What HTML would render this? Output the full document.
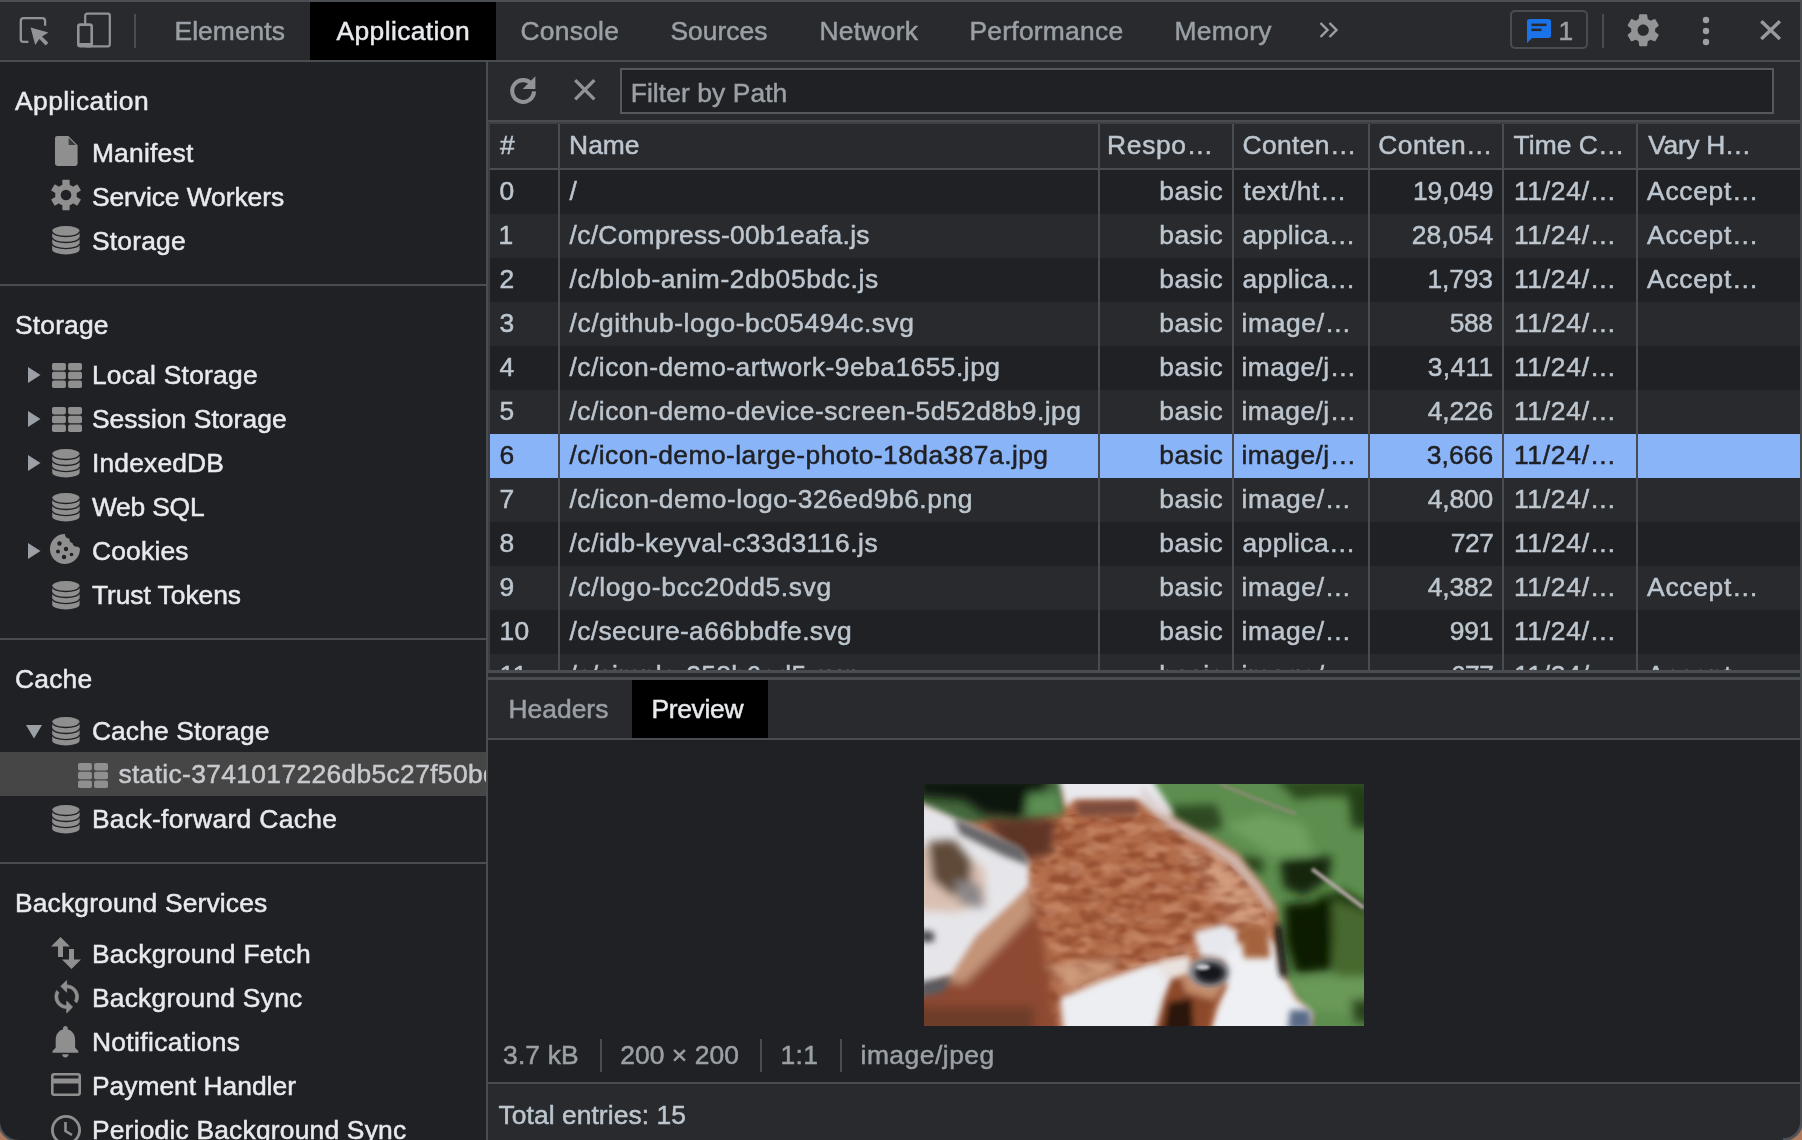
<!DOCTYPE html>
<html lang="en">
<head>
<meta charset="utf-8">
<title>DevTools - Application - Cache Storage</title>
<style>
html,body{margin:0;padding:0;}
body{width:1802px;height:1140px;overflow:hidden;background:#202124;position:relative;
  font-family:"Liberation Sans",sans-serif;font-size:26.4px;color:#e8eaed;}
.abs{position:absolute;}
svg{position:absolute;overflow:visible;}
.t{position:absolute;height:44px;line-height:44px;white-space:nowrap;-webkit-text-stroke:0.5px currentColor;}
#wrap{position:absolute;left:0;top:0;width:1802px;height:1140px;will-change:transform;}
#topline{left:0;top:0;width:1802px;height:2px;background:#4b4e52;}
#tabbar{left:0;top:2px;width:1802px;height:58px;background:#292a2d;}
#tabborder{left:0;top:60px;width:1802px;height:2px;background:#494c50;}
.seltab{position:absolute;height:58px;background:#000;}
.vdiv{position:absolute;width:2px;background:#494c50;}
#sidebar{left:0;top:62px;width:486px;height:1078px;background:#202124;overflow:hidden;}
#sideborder{left:486px;top:62px;width:2px;height:1078px;background:#494c50;}
.sep{position:absolute;left:0;width:486px;height:2px;background:#494c50;}
#toolbar{left:488px;top:62px;width:1314px;height:58px;background:#292a2d;}
#toolborder{left:488px;top:120px;width:1314px;height:2px;background:#494c50;}
#filterbox{left:620px;top:68px;width:1150px;height:42px;border:2px solid #55585c;background:#202124;}
#grid{left:488px;top:122px;width:1314px;height:548px;background:#292a2d;overflow:hidden;}
.row{position:absolute;left:2px;width:1310px;height:44px;}
.row.odd{background:#202124;}
.row.even{background:#292a2d;}
.row.selr{background:#8ab4f8;}
.gl{position:absolute;top:2px;width:2px;height:548px;background:#494c50;}
</style>
</head>
<body>
<div id="wrap">
<div class="abs" id="tabbar"></div>
<div class="abs" id="topline"></div>
<div class="abs" id="tabborder"></div>
<div class="seltab" style="left:310px;top:2px;width:186px"></div>
<svg id="ic-inspect" style="left:18px;top:14px" width="34" height="34" viewBox="0 0 34 34"><path d="M27.1 11.7V6.8Q27.1 4.1 24.4 4.1H5.5Q2.8 4.1 2.8 6.8V25.2Q2.8 27.9 5.5 27.9H10.4" fill="none" stroke="#919396" stroke-width="2.3"/><path d="M12.6 13.4L30.4 18.6L24 22.4L30.4 28.8L27.6 31.4L21.4 25L17.2 31Z" fill="#919396"/></svg>
<svg id="ic-device" style="left:76px;top:11px" width="36" height="38" viewBox="0 0 36 38"><rect x="9.2" y="2.7" width="24.6" height="32.6" rx="2" fill="none" stroke="#919396" stroke-width="2.2"/><rect x="2.3" y="13.6" width="13.4" height="21.6" rx="2" fill="#292a2d" stroke="#919396" stroke-width="2.6"/><rect x="2" y="32" width="14" height="4" fill="#919396"/></svg>
<div class="vdiv" style="left:134px;top:14px;height:34px"></div>
<svg id="ic-more" style="left:1318px;top:21px" width="22" height="18" viewBox="0 0 22 18"><path d="M2.5 2L9.5 9L2.5 16M11.5 2L18.5 9L11.5 16" fill="none" stroke="#9aa0a6" stroke-width="2.4"/></svg>
<div class="abs" style="left:1510px;top:10.4px;width:74.3px;height:35px;border:2px solid #494c50;border-radius:5px"></div>
<svg id="ic-issue" style="left:1526px;top:18px" width="26" height="26" viewBox="0 0 26 26"><path d="M3.5 1H22.5Q25 1 25 3.5V17.5Q25 20 22.5 20H6L1 25V3.5Q1 1 3.5 1Z" fill="#1a73e8"/><rect x="5.5" y="5.6" width="15" height="2.5" fill="#292a2d"/><rect x="5.5" y="10.6" width="10" height="2.5" fill="#292a2d"/></svg>
<div class="vdiv" style="left:1602px;top:14px;height:34px"></div>
<svg id="ic-gear" style="left:1623.7px;top:10.8px" width="38.4" height="38.4" viewBox="0 0 24 24"><path fill="#939496" d="M19.43 12.98c.04-.32.07-.64.07-.98s-.03-.66-.07-.98l2.11-1.65c.19-.15.24-.42.12-.64l-2-3.46c-.12-.22-.39-.3-.61-.22l-2.49 1c-.52-.4-1.08-.73-1.69-.98l-.38-2.65C14.46 2.18 14.25 2 14 2h-4c-.25 0-.46.18-.49.42l-.38 2.65c-.61.25-1.17.59-1.69.98l-2.49-1c-.23-.09-.49 0-.61.22l-2 3.46c-.13.22-.07.49.12.64l2.11 1.65c-.04.32-.07.65-.07.98s.03.66.07.98l-2.11 1.65c-.19.15-.24.42-.12.64l2 3.46c.12.22.39.3.61.22l2.49-1c.52.4 1.08.73 1.69.98l.38 2.65c.03.24.24.42.49.42h4c.25 0 .46-.18.49-.42l.38-2.65c.61-.25 1.17-.59 1.69-.98l2.49 1c.23.09.49 0 .61-.22l2-3.46c.12-.22.07-.49-.12-.64l-2.11-1.65zM12 15.5c-1.93 0-3.5-1.57-3.5-3.5s1.57-3.5 3.5-3.5 3.5 1.57 3.5 3.5-1.57 3.5-3.5 3.5z"/></svg>
<svg id="ic-kebab" style="left:1702px;top:16px" width="8" height="30" viewBox="0 0 8 30"><circle cx="4" cy="4" r="3.2" fill="#9aa0a6"/><circle cx="4" cy="15" r="3.2" fill="#9aa0a6"/><circle cx="4" cy="26" r="3.2" fill="#9aa0a6"/></svg>
<svg id="ic-close" style="left:1760.3px;top:19.8px" width="21.2" height="20.4" viewBox="0 0 21.2 20.4"><path d="M1.3 1.3L19.9 19.1M19.9 1.3L1.3 19.1" fill="none" stroke="#97999c" stroke-width="3.4"/></svg>
<div class="t" id="tab_el" style="left:174.50px;top:9.0px;letter-spacing:0.064px;color:#9aa0a6">Elements</div>
<div class="t" id="tab_app" style="left:336.50px;top:9.0px;letter-spacing:0.400px;color:#e8eaed">Application</div>
<div class="t" id="tab_con" style="left:520.50px;top:9.0px;letter-spacing:0.267px;color:#9aa0a6">Console</div>
<div class="t" id="tab_src" style="left:670.50px;top:9.0px;letter-spacing:0.017px;color:#9aa0a6">Sources</div>
<div class="t" id="tab_net" style="left:819.50px;top:9.0px;letter-spacing:0.267px;color:#9aa0a6">Network</div>
<div class="t" id="tab_perf" style="left:969.50px;top:9.0px;letter-spacing:0.250px;color:#9aa0a6">Performance</div>
<div class="t" id="tab_mem" style="left:1174.50px;top:9.0px;letter-spacing:0.350px;color:#9aa0a6">Memory</div>
<div class="t" id="tab_cnt" style="left:1558.50px;top:9.0px;letter-spacing:0.350px;color:#9aa0a6">1</div>
<div class="abs" id="sidebar">
<div class="sep" style="top:222px"></div>
<div class="sep" style="top:576px"></div>
<div class="sep" style="top:800px"></div>
<div class="abs" style="left:0;top:690px;width:486px;height:44px;background:#464647"></div>
<div class="t" id="h_app" style="left:15.00px;top:17.0px;letter-spacing:0.450px;color:#e8eaed">Application</div>
<div class="t" id="s_man" style="left:91.90px;top:68.8px;letter-spacing:0.240px;color:#e8eaed">Manifest</div>
<div class="t" id="s_sw" style="left:91.90px;top:112.8px;letter-spacing:-0.061px;color:#e8eaed">Service Workers</div>
<div class="t" id="s_sto" style="left:91.90px;top:156.8px;letter-spacing:0.220px;color:#e8eaed">Storage</div>
<div class="t" id="h_sto" style="left:15.00px;top:240.7px;letter-spacing:0.180px;color:#e8eaed">Storage</div>
<div class="t" id="s_ls" style="left:91.90px;top:290.7px;letter-spacing:0.239px;color:#e8eaed">Local Storage</div>
<div class="t" id="s_ss" style="left:91.90px;top:334.7px;letter-spacing:0.080px;color:#e8eaed">Session Storage</div>
<div class="t" id="s_idb" style="left:91.90px;top:378.7px;letter-spacing:0.188px;color:#e8eaed">IndexedDB</div>
<div class="t" id="s_sql" style="left:91.90px;top:422.7px;letter-spacing:-0.201px;color:#e8eaed">Web SQL</div>
<div class="t" id="s_ck" style="left:91.90px;top:466.7px;letter-spacing:0.221px;color:#e8eaed">Cookies</div>
<div class="t" id="s_tt" style="left:91.90px;top:510.7px;letter-spacing:-0.046px;color:#e8eaed">Trust Tokens</div>
<div class="t" id="h_cache" style="left:15.00px;top:594.7px;letter-spacing:0.225px;color:#e8eaed">Cache</div>
<div class="t" id="s_cs" style="left:91.90px;top:646.7px;letter-spacing:0.121px;color:#e8eaed">Cache Storage</div>
<div class="t" id="s_bfc" style="left:91.90px;top:734.7px;letter-spacing:0.355px;color:#e8eaed">Back-forward Cache</div>
<div class="t" id="h_bg" style="left:15.00px;top:818.7px;letter-spacing:0.160px;color:#e8eaed">Background Services</div>
<div class="t" id="s_bf" style="left:91.90px;top:870.2px;letter-spacing:0.301px;color:#e8eaed">Background Fetch</div>
<div class="t" id="s_bs" style="left:91.90px;top:914.2px;letter-spacing:0.252px;color:#e8eaed">Background Sync</div>
<div class="t" id="s_not" style="left:91.90px;top:958.2px;letter-spacing:0.366px;color:#e8eaed">Notifications</div>
<div class="t" id="s_pay" style="left:91.90px;top:1002.2px;letter-spacing:0.011px;color:#e8eaed">Payment Handler</div>
<div class="t" id="s_pbs" style="left:91.90px;top:1046.2px;letter-spacing:0.205px;color:#e8eaed">Periodic Background Sync</div>
<div class="t" id="s_static" style="left:118.40px;top:690.2px;letter-spacing:0.350px;color:#c8cacd">static-3741017226db5c27f50bd</div>
<svg style="left:54.8px;top:74px" width="22.6" height="30" viewBox="0 0 22.6 30"><path d="M2.5 0H13.4L22.6 9.2V27.5Q22.6 30 20.1 30H2.5Q0 30 0 27.5V2.5Q0 0 2.5 0Z" fill="#8f8f8f"/><path d="M13.6 1.8V9H20.8Z" fill="#3a3b3d"/></svg>
<svg style="left:50.05px;top:117.1px" width="32" height="32" viewBox="-16 -16 32 32"><g fill="#8f8f8f"><circle r="10.8"/><rect x="-3.65" y="-15.2" width="7.3" height="8" rx=".6" transform="rotate(0)"/><rect x="-3.65" y="-15.2" width="7.3" height="8" rx=".6" transform="rotate(60)"/><rect x="-3.65" y="-15.2" width="7.3" height="8" rx=".6" transform="rotate(120)"/><rect x="-3.65" y="-15.2" width="7.3" height="8" rx=".6" transform="rotate(180)"/><rect x="-3.65" y="-15.2" width="7.3" height="8" rx=".6" transform="rotate(240)"/><rect x="-3.65" y="-15.2" width="7.3" height="8" rx=".6" transform="rotate(300)"/></g><circle r="5.3" fill="#202124"/></svg>
<svg style="left:52.2px;top:163.6px" width="27.8" height="28.6" viewBox="0 0 27.8 28.6"><path d="M.2 5A13.7 4.9 0 0 1 27.6 5V23.6A13.7 4.9 0 0 1 .2 23.6Z" fill="#8f8f8f"/><path d="M.2 5.6A13.7 4.9 0 0 0 27.6 5.6" fill="none" stroke="#202124" stroke-width="1.3"/><path d="M.2 11.6A13.7 4.9 0 0 0 27.6 11.6" fill="none" stroke="#202124" stroke-width="1.3"/><path d="M.2 17.7A13.7 4.9 0 0 0 27.6 17.7" fill="none" stroke="#202124" stroke-width="1.3"/></svg>
<svg style="left:52.2px;top:386.6px" width="27.8" height="28.6" viewBox="0 0 27.8 28.6"><path d="M.2 5A13.7 4.9 0 0 1 27.6 5V23.6A13.7 4.9 0 0 1 .2 23.6Z" fill="#8f8f8f"/><path d="M.2 5.6A13.7 4.9 0 0 0 27.6 5.6" fill="none" stroke="#202124" stroke-width="1.3"/><path d="M.2 11.6A13.7 4.9 0 0 0 27.6 11.6" fill="none" stroke="#202124" stroke-width="1.3"/><path d="M.2 17.7A13.7 4.9 0 0 0 27.6 17.7" fill="none" stroke="#202124" stroke-width="1.3"/></svg>
<svg style="left:52.2px;top:430.6px" width="27.8" height="28.6" viewBox="0 0 27.8 28.6"><path d="M.2 5A13.7 4.9 0 0 1 27.6 5V23.6A13.7 4.9 0 0 1 .2 23.6Z" fill="#8f8f8f"/><path d="M.2 5.6A13.7 4.9 0 0 0 27.6 5.6" fill="none" stroke="#202124" stroke-width="1.3"/><path d="M.2 11.6A13.7 4.9 0 0 0 27.6 11.6" fill="none" stroke="#202124" stroke-width="1.3"/><path d="M.2 17.7A13.7 4.9 0 0 0 27.6 17.7" fill="none" stroke="#202124" stroke-width="1.3"/></svg>
<svg style="left:52.2px;top:518.6px" width="27.8" height="28.6" viewBox="0 0 27.8 28.6"><path d="M.2 5A13.7 4.9 0 0 1 27.6 5V23.6A13.7 4.9 0 0 1 .2 23.6Z" fill="#8f8f8f"/><path d="M.2 5.6A13.7 4.9 0 0 0 27.6 5.6" fill="none" stroke="#202124" stroke-width="1.3"/><path d="M.2 11.6A13.7 4.9 0 0 0 27.6 11.6" fill="none" stroke="#202124" stroke-width="1.3"/><path d="M.2 17.7A13.7 4.9 0 0 0 27.6 17.7" fill="none" stroke="#202124" stroke-width="1.3"/></svg>
<svg style="left:52.2px;top:654.6px" width="27.8" height="28.6" viewBox="0 0 27.8 28.6"><path d="M.2 5A13.7 4.9 0 0 1 27.6 5V23.6A13.7 4.9 0 0 1 .2 23.6Z" fill="#8f8f8f"/><path d="M.2 5.6A13.7 4.9 0 0 0 27.6 5.6" fill="none" stroke="#202124" stroke-width="1.3"/><path d="M.2 11.6A13.7 4.9 0 0 0 27.6 11.6" fill="none" stroke="#202124" stroke-width="1.3"/><path d="M.2 17.7A13.7 4.9 0 0 0 27.6 17.7" fill="none" stroke="#202124" stroke-width="1.3"/></svg>
<svg style="left:52.2px;top:742.6px" width="27.8" height="28.6" viewBox="0 0 27.8 28.6"><path d="M.2 5A13.7 4.9 0 0 1 27.6 5V23.6A13.7 4.9 0 0 1 .2 23.6Z" fill="#8f8f8f"/><path d="M.2 5.6A13.7 4.9 0 0 0 27.6 5.6" fill="none" stroke="#202124" stroke-width="1.3"/><path d="M.2 11.6A13.7 4.9 0 0 0 27.6 11.6" fill="none" stroke="#202124" stroke-width="1.3"/><path d="M.2 17.7A13.7 4.9 0 0 0 27.6 17.7" fill="none" stroke="#202124" stroke-width="1.3"/></svg>
<svg style="left:52.2px;top:300.6px" width="30" height="25" viewBox="0 0 30 25"><g fill="#8f8f8f"><rect x="0.00" y="0.00" width="13.9" height="7.4" rx="1.8"/><rect x="16.10" y="0.00" width="13.9" height="7.4" rx="1.8"/><rect x="0.00" y="8.80" width="13.9" height="7.4" rx="1.8"/><rect x="16.10" y="8.80" width="13.9" height="7.4" rx="1.8"/><rect x="0.00" y="17.60" width="13.9" height="7.4" rx="1.8"/><rect x="16.10" y="17.60" width="13.9" height="7.4" rx="1.8"/></g></svg>
<svg style="left:52.2px;top:344.6px" width="30" height="25" viewBox="0 0 30 25"><g fill="#8f8f8f"><rect x="0.00" y="0.00" width="13.9" height="7.4" rx="1.8"/><rect x="16.10" y="0.00" width="13.9" height="7.4" rx="1.8"/><rect x="0.00" y="8.80" width="13.9" height="7.4" rx="1.8"/><rect x="16.10" y="8.80" width="13.9" height="7.4" rx="1.8"/><rect x="0.00" y="17.60" width="13.9" height="7.4" rx="1.8"/><rect x="16.10" y="17.60" width="13.9" height="7.4" rx="1.8"/></g></svg>
<svg style="left:78.3px;top:700.6px" width="30" height="25" viewBox="0 0 30 25"><g fill="#8f8f8f"><rect x="0.00" y="0.00" width="13.9" height="7.4" rx="1.8"/><rect x="16.10" y="0.00" width="13.9" height="7.4" rx="1.8"/><rect x="0.00" y="8.80" width="13.9" height="7.4" rx="1.8"/><rect x="16.10" y="8.80" width="13.9" height="7.4" rx="1.8"/><rect x="0.00" y="17.60" width="13.9" height="7.4" rx="1.8"/><rect x="16.10" y="17.60" width="13.9" height="7.4" rx="1.8"/></g></svg>
<svg style="left:28px;top:305px" width="13" height="16" viewBox="0 0 13 16"><path d="M0 0L12.5 8L0 16Z" fill="#9aa0a6"/></svg>
<svg style="left:28px;top:349px" width="13" height="16" viewBox="0 0 13 16"><path d="M0 0L12.5 8L0 16Z" fill="#9aa0a6"/></svg>
<svg style="left:28px;top:393px" width="13" height="16" viewBox="0 0 13 16"><path d="M0 0L12.5 8L0 16Z" fill="#9aa0a6"/></svg>
<svg style="left:28px;top:481px" width="13" height="16" viewBox="0 0 13 16"><path d="M0 0L12.5 8L0 16Z" fill="#9aa0a6"/></svg>
<svg style="left:26px;top:663px" width="16" height="14" viewBox="0 0 16 14"><path d="M0 0H16L8 13.5Z" fill="#9aa0a6"/></svg>
<svg style="left:50px;top:472px" width="30" height="30" viewBox="0 0 30 30"><path fill="#8f8f8f" d="M15 0a4 4 0 0 0 4.5 4.5a4 4 0 0 0 3 4.5a4 4 0 0 0 5 3.5a4 4 0 0 0 2.4 1.5A15 15 0 1 1 15 0Z"/><g fill="#202124"><circle cx="9.5" cy="9.5" r="2.2"/><circle cx="16" cy="15" r="2.2"/><circle cx="8" cy="17.5" r="2"/><circle cx="14" cy="23" r="2.2"/><circle cx="21.5" cy="20.5" r="1.8"/></g></svg>
<svg style="left:51px;top:875px" width="30" height="32" viewBox="0 0 30 32"><path fill="#8f8f8f" d="M9.5 0L19 9.5H12V20H7V9.5H0Z"/><path fill="#8f8f8f" d="M20.5 32L11 22.5H18V12H23V22.5H30Z"/></svg>
<svg style="left:48.6px;top:917.4px" width="35.4" height="35.4" viewBox="0 0 24 24"><path stroke="#8f8f8f" stroke-width=".5" fill="#8f8f8f" d="M12 4V1L8 5l4 4V6c3.31 0 6 2.69 6 6 0 1.01-.25 1.97-.7 2.8l1.46 1.46C19.54 15.03 20 13.57 20 12c0-4.42-3.58-8-8-8zm0 14c-3.31 0-6-2.69-6-6 0-1.01.25-1.97.7-2.8L5.24 7.74C4.46 8.97 4 10.43 4 12c0 4.42 3.58 8 8 8v3l4-4-4-4v3z"/></svg>
<svg style="left:46.4px;top:960.4px" width="38.8" height="38.8" viewBox="0 0 24 24"><path fill="#8f8f8f" d="M12 22c1.1 0 2-.9 2-2h-4c0 1.1.89 2 2 2zm6-6v-5c0-3.07-1.64-5.64-4.5-6.32V4c0-.83-.67-1.5-1.5-1.5s-1.5.67-1.5 1.5v.68C7.63 5.36 6 7.92 6 11v5l-2 2v1h16v-1l-2-2z"/></svg>
<svg style="left:51px;top:1011.3px" width="30" height="23" viewBox="0 0 30 23"><rect x="1.3" y="1.3" width="27.4" height="20.4" rx="2" fill="none" stroke="#8f8f8f" stroke-width="2.6"/><rect x="1" y="5.5" width="28" height="5" fill="#8f8f8f"/></svg>
<svg style="left:51px;top:1052.9px" width="30" height="30" viewBox="0 0 30 30"><circle cx="15" cy="15" r="13.6" fill="none" stroke="#8f8f8f" stroke-width="2.8"/><path d="M14.5 7V16L21 20" fill="none" stroke="#8f8f8f" stroke-width="2.6"/></svg>
</div>
<div class="abs" id="sideborder"></div>
<div class="abs" id="toolbar"></div>
<div class="abs" id="toolborder"></div>
<svg id="ic-refresh" style="left:507.8px;top:75.6px" width="30" height="30" viewBox="0 0 30 30"><path d="M24.4 9.3A10.9 10.9 0 1 0 26 15.4" fill="none" stroke="#919396" stroke-width="4.1"/><path d="M27.4 .2V13H14.6Z" fill="#919396"/></svg>
<svg id="ic-clear" style="left:574.2px;top:79.4px" width="21.6" height="21.6" viewBox="0 0 21.6 21.6"><path d="M1.2 1.2L20.4 20.4M20.4 1.2L1.2 20.4" fill="none" stroke="#919396" stroke-width="3.3"/></svg>
<div class="abs" id="filterbox"></div>
<div class="abs" id="grid">
<div class="abs" style="left:0;top:0;width:1314px;height:2px;background:#3d3f43"></div>
<div class="abs" style="left:0;top:0;width:2px;height:550px;background:#3d3f43"></div>
<div class="abs" style="left:2px;top:46px;width:1312px;height:2px;background:#494c50"></div>
<div class="row odd" style="top:48px"></div>
<div class="row even" style="top:92px"></div>
<div class="row odd" style="top:136px"></div>
<div class="row even" style="top:180px"></div>
<div class="row odd" style="top:224px"></div>
<div class="row even" style="top:268px"></div>
<div class="row selr" style="top:312px"></div>
<div class="row even" style="top:356px"></div>
<div class="row odd" style="top:400px"></div>
<div class="row even" style="top:444px"></div>
<div class="row odd" style="top:488px"></div>
<div class="row even" style="top:532px"></div>
<div class="gl" style="left:70px"></div>
<div class="gl" style="left:610px"></div>
<div class="gl" style="left:744px"></div>
<div class="gl" style="left:880px"></div>
<div class="gl" style="left:1014px"></div>
<div class="gl" style="left:1148px"></div>
<div class="t" id="g_h0" style="left:12.10px;top:0.5px;letter-spacing:0.350px;color:#bdc6cf">#</div>
<div class="t" id="g_h1" style="left:81.10px;top:0.5px;letter-spacing:-0.019px;color:#bdc6cf">Name</div>
<div class="t" id="g_h2" style="left:619.10px;top:0.5px;letter-spacing:0.650px;color:#bdc6cf">Respo…</div>
<div class="t" id="g_h3" style="left:754.50px;top:0.5px;letter-spacing:0.383px;color:#bdc6cf">Conten…</div>
<div class="t" id="g_h4" style="left:890.30px;top:0.5px;letter-spacing:0.450px;color:#bdc6cf">Conten…</div>
<div class="t" id="g_h5" style="left:1025.60px;top:0.5px;letter-spacing:0.052px;color:#bdc6cf">Time C…</div>
<div class="t" id="g_h6" style="left:1160.30px;top:0.5px;letter-spacing:-0.357px;color:#bdc6cf">Vary H…</div>
<div class="t" id="r0c0" style="left:11.50px;top:46.5px;letter-spacing:0.350px;color:#bdc6cf">0</div>
<div class="t" id="r0c1" style="left:81.50px;top:46.5px;letter-spacing:0.350px;color:#bdc6cf">/</div>
<div class="t" id="r0c2" style="left:671.30px;top:46.5px;letter-spacing:0.475px;color:#bdc6cf">basic</div>
<div class="t" id="r0c3" style="left:755.50px;top:46.5px;letter-spacing:0.667px;color:#bdc6cf">text/ht…</div>
<div class="t" id="r0c4" style="left:924.90px;top:46.5px;letter-spacing:-0.050px;color:#bdc6cf">19,049</div>
<div class="t" id="r0c5" style="left:1025.90px;top:46.5px;letter-spacing:0.752px;color:#bdc6cf">11/24/…</div>
<div class="t" id="r0c6" style="left:1159.10px;top:46.5px;letter-spacing:0.693px;color:#bdc6cf">Accept…</div>
<div class="t" id="r1c0" style="left:10.50px;top:90.5px;letter-spacing:0.350px;color:#bdc6cf">1</div>
<div class="t" id="r1c1" style="left:81.50px;top:90.5px;letter-spacing:0.304px;color:#bdc6cf">/c/Compress-00b1eafa.js</div>
<div class="t" id="r1c2" style="left:671.30px;top:90.5px;letter-spacing:0.475px;color:#bdc6cf">basic</div>
<div class="t" id="r1c3" style="left:754.50px;top:90.5px;letter-spacing:0.406px;color:#bdc6cf">applica…</div>
<div class="t" id="r1c4" style="left:923.70px;top:90.5px;letter-spacing:0.150px;color:#bdc6cf">28,054</div>
<div class="t" id="r1c5" style="left:1025.90px;top:90.5px;letter-spacing:0.752px;color:#bdc6cf">11/24/…</div>
<div class="t" id="r1c6" style="left:1159.10px;top:90.5px;letter-spacing:0.693px;color:#bdc6cf">Accept…</div>
<div class="t" id="r2c0" style="left:11.50px;top:134.5px;letter-spacing:0.350px;color:#bdc6cf">2</div>
<div class="t" id="r2c1" style="left:81.50px;top:134.5px;letter-spacing:0.597px;color:#bdc6cf">/c/blob-anim-2db05bdc.js</div>
<div class="t" id="r2c2" style="left:671.30px;top:134.5px;letter-spacing:0.475px;color:#bdc6cf">basic</div>
<div class="t" id="r2c3" style="left:754.50px;top:134.5px;letter-spacing:0.406px;color:#bdc6cf">applica…</div>
<div class="t" id="r2c4" style="left:939.50px;top:134.5px;letter-spacing:-0.150px;color:#bdc6cf">1,793</div>
<div class="t" id="r2c5" style="left:1025.90px;top:134.5px;letter-spacing:0.752px;color:#bdc6cf">11/24/…</div>
<div class="t" id="r2c6" style="left:1159.10px;top:134.5px;letter-spacing:0.693px;color:#bdc6cf">Accept…</div>
<div class="t" id="r3c0" style="left:11.50px;top:178.5px;letter-spacing:0.350px;color:#bdc6cf">3</div>
<div class="t" id="r3c1" style="left:81.50px;top:178.5px;letter-spacing:0.555px;color:#bdc6cf">/c/github-logo-bc05494c.svg</div>
<div class="t" id="r3c2" style="left:671.30px;top:178.5px;letter-spacing:0.475px;color:#bdc6cf">basic</div>
<div class="t" id="r3c3" style="left:753.50px;top:178.5px;letter-spacing:0.653px;color:#bdc6cf">image/…</div>
<div class="t" id="r3c4" style="left:961.70px;top:178.5px;letter-spacing:-0.400px;color:#bdc6cf">588</div>
<div class="t" id="r3c5" style="left:1025.90px;top:178.5px;letter-spacing:0.752px;color:#bdc6cf">11/24/…</div>
<div class="t" id="r4c0" style="left:11.50px;top:222.5px;letter-spacing:0.350px;color:#bdc6cf">4</div>
<div class="t" id="r4c1" style="left:81.50px;top:222.5px;letter-spacing:0.480px;color:#bdc6cf">/c/icon-demo-artwork-9eba1655.jpg</div>
<div class="t" id="r4c2" style="left:671.30px;top:222.5px;letter-spacing:0.475px;color:#bdc6cf">basic</div>
<div class="t" id="r4c3" style="left:753.50px;top:222.5px;letter-spacing:0.437px;color:#bdc6cf">image/j…</div>
<div class="t" id="r4c4" style="left:939.70px;top:222.5px;letter-spacing:0.350px;color:#bdc6cf">3,411</div>
<div class="t" id="r4c5" style="left:1025.90px;top:222.5px;letter-spacing:0.752px;color:#bdc6cf">11/24/…</div>
<div class="t" id="r5c0" style="left:11.50px;top:266.5px;letter-spacing:0.350px;color:#bdc6cf">5</div>
<div class="t" id="r5c1" style="left:81.50px;top:266.5px;letter-spacing:0.487px;color:#bdc6cf">/c/icon-demo-device-screen-5d52d8b9.jpg</div>
<div class="t" id="r5c2" style="left:671.30px;top:266.5px;letter-spacing:0.475px;color:#bdc6cf">basic</div>
<div class="t" id="r5c3" style="left:753.50px;top:266.5px;letter-spacing:0.437px;color:#bdc6cf">image/j…</div>
<div class="t" id="r5c4" style="left:939.70px;top:266.5px;letter-spacing:-0.150px;color:#bdc6cf">4,226</div>
<div class="t" id="r5c5" style="left:1025.90px;top:266.5px;letter-spacing:0.752px;color:#bdc6cf">11/24/…</div>
<div class="t" id="r6c0" style="left:11.50px;top:310.5px;letter-spacing:0.350px;color:#202124">6</div>
<div class="t" id="r6c1" style="left:81.50px;top:310.5px;letter-spacing:0.456px;color:#202124">/c/icon-demo-large-photo-18da387a.jpg</div>
<div class="t" id="r6c2" style="left:671.30px;top:310.5px;letter-spacing:0.475px;color:#202124">basic</div>
<div class="t" id="r6c3" style="left:753.50px;top:310.5px;letter-spacing:0.437px;color:#202124">image/j…</div>
<div class="t" id="r6c4" style="left:938.70px;top:310.5px;letter-spacing:0.100px;color:#202124">3,666</div>
<div class="t" id="r6c5" style="left:1025.90px;top:310.5px;letter-spacing:0.752px;color:#202124">11/24/…</div>
<div class="t" id="r7c0" style="left:11.50px;top:354.5px;letter-spacing:0.350px;color:#bdc6cf">7</div>
<div class="t" id="r7c1" style="left:81.50px;top:354.5px;letter-spacing:0.535px;color:#bdc6cf">/c/icon-demo-logo-326ed9b6.png</div>
<div class="t" id="r7c2" style="left:671.30px;top:354.5px;letter-spacing:0.475px;color:#bdc6cf">basic</div>
<div class="t" id="r7c3" style="left:753.50px;top:354.5px;letter-spacing:0.653px;color:#bdc6cf">image/…</div>
<div class="t" id="r7c4" style="left:939.70px;top:354.5px;letter-spacing:-0.150px;color:#bdc6cf">4,800</div>
<div class="t" id="r7c5" style="left:1025.90px;top:354.5px;letter-spacing:0.752px;color:#bdc6cf">11/24/…</div>
<div class="t" id="r8c0" style="left:11.50px;top:398.5px;letter-spacing:0.350px;color:#bdc6cf">8</div>
<div class="t" id="r8c1" style="left:81.50px;top:398.5px;letter-spacing:0.512px;color:#bdc6cf">/c/idb-keyval-c33d3116.js</div>
<div class="t" id="r8c2" style="left:671.30px;top:398.5px;letter-spacing:0.475px;color:#bdc6cf">basic</div>
<div class="t" id="r8c3" style="left:754.50px;top:398.5px;letter-spacing:0.406px;color:#bdc6cf">applica…</div>
<div class="t" id="r8c4" style="left:962.70px;top:398.5px;letter-spacing:-0.400px;color:#bdc6cf">727</div>
<div class="t" id="r8c5" style="left:1025.90px;top:398.5px;letter-spacing:0.752px;color:#bdc6cf">11/24/…</div>
<div class="t" id="r9c0" style="left:11.50px;top:442.5px;letter-spacing:0.350px;color:#bdc6cf">9</div>
<div class="t" id="r9c1" style="left:81.50px;top:442.5px;letter-spacing:0.642px;color:#bdc6cf">/c/logo-bcc20dd5.svg</div>
<div class="t" id="r9c2" style="left:671.30px;top:442.5px;letter-spacing:0.475px;color:#bdc6cf">basic</div>
<div class="t" id="r9c3" style="left:753.50px;top:442.5px;letter-spacing:0.653px;color:#bdc6cf">image/…</div>
<div class="t" id="r9c4" style="left:939.70px;top:442.5px;letter-spacing:-0.150px;color:#bdc6cf">4,382</div>
<div class="t" id="r9c5" style="left:1025.90px;top:442.5px;letter-spacing:0.752px;color:#bdc6cf">11/24/…</div>
<div class="t" id="r9c6" style="left:1159.10px;top:442.5px;letter-spacing:0.693px;color:#bdc6cf">Accept…</div>
<div class="t" id="r10c0" style="left:11.50px;top:486.5px;letter-spacing:0.350px;color:#bdc6cf">10</div>
<div class="t" id="r10c1" style="left:81.50px;top:486.5px;letter-spacing:0.374px;color:#bdc6cf">/c/secure-a66bbdfe.svg</div>
<div class="t" id="r10c2" style="left:671.30px;top:486.5px;letter-spacing:0.475px;color:#bdc6cf">basic</div>
<div class="t" id="r10c3" style="left:753.50px;top:486.5px;letter-spacing:0.653px;color:#bdc6cf">image/…</div>
<div class="t" id="r10c4" style="left:961.70px;top:486.5px;letter-spacing:-0.150px;color:#bdc6cf">991</div>
<div class="t" id="r10c5" style="left:1025.90px;top:486.5px;letter-spacing:0.752px;color:#bdc6cf">11/24/…</div>
<div class="t" id="r11c0" style="left:11.50px;top:530.5px;letter-spacing:0.350px;color:#bdc6cf">11</div>
<div class="t" id="r11c1" style="left:81.50px;top:530.5px;letter-spacing:0.374px;color:#bdc6cf">/c/simple-258b6ed5.svg</div>
<div class="t" id="r11c2" style="left:671.30px;top:530.5px;letter-spacing:0.475px;color:#bdc6cf">basic</div>
<div class="t" id="r11c3" style="left:753.50px;top:530.5px;letter-spacing:0.653px;color:#bdc6cf">image/…</div>
<div class="t" id="r11c4" style="left:962.70px;top:530.5px;letter-spacing:-0.400px;color:#bdc6cf">677</div>
<div class="t" id="r11c5" style="left:1025.90px;top:530.5px;letter-spacing:0.752px;color:#bdc6cf">11/24/…</div>
<div class="t" id="r11c6" style="left:1159.10px;top:530.5px;letter-spacing:0.693px;color:#bdc6cf">Accept…</div>
</div>
<div class="abs" style="left:488px;top:670px;width:1314px;height:10px;background:#292a2d"></div>
<div class="abs" style="left:488px;top:670px;width:1314px;height:3px;background:#494c50"></div>
<div class="abs" style="left:488px;top:677px;width:1314px;height:3px;background:#494c50"></div>
<div class="abs" style="left:488px;top:680px;width:1314px;height:58px;background:#292a2d"></div>
<div class="abs" style="left:488px;top:738px;width:1314px;height:2px;background:#494c50"></div>
<div class="seltab" style="left:632px;top:680px;width:136px"></div>
<div class="abs" id="preview" style="left:488px;top:740px;width:1314px;height:342px;background:#202124"></div>
<svg id="photo" style="left:924px;top:784px" width="440" height="242" viewBox="0 0 440 242">
<defs>
<clipPath id="pc"><rect width="440" height="242"/></clipPath>
<filter id="b5" x="-20%" y="-20%" width="140%" height="140%"><feGaussianBlur stdDeviation="5"/></filter>
<filter id="b3" x="-20%" y="-20%" width="140%" height="140%"><feGaussianBlur stdDeviation="3"/></filter>
<filter id="b2" x="-20%" y="-20%" width="140%" height="140%"><feGaussianBlur stdDeviation="1.800"/></filter>
<filter id="fur" x="0" y="0" width="100%" height="100%" color-interpolation-filters="sRGB"><feTurbulence type="fractalNoise" baseFrequency="0.045 0.10" numOctaves="2" seed="11" result="n"/><feColorMatrix in="n" type="matrix" values="0 0 0 0 0.50  0 0 0 0 0.22  0 0 0 0 0.12  4.5 0 0 0 -1.9" result="c"/><feGaussianBlur in="c" stdDeviation="1.400" result="g"/><feComposite in="g" in2="SourceGraphic" operator="in"/></filter>
<filter id="furl" x="0" y="0" width="100%" height="100%" color-interpolation-filters="sRGB"><feTurbulence type="fractalNoise" baseFrequency="0.05 0.10" numOctaves="2" seed="23" result="n"/><feColorMatrix in="n" type="matrix" values="0 0 0 0 0.86  0 0 0 0 0.64  0 0 0 0 0.52  4.5 0 0 0 -2.1" result="c"/><feGaussianBlur in="c" stdDeviation="1.400" result="g"/><feComposite in="g" in2="SourceGraphic" operator="in"/></filter>
</defs>
<g clip-path="url(#pc)">
<rect width="440" height="242" fill="#b26c4a"/>
<!-- green areas -->
<g filter="url(#b3)">
<path d="M206 -10L248 30L280 50L312 70L337 102L351 124L354 158L362 193L374 215L388 228L388 252L450 252L450 -10Z" fill="#5d8e50"/>
<path d="M-10 -10H140L138 40L104 44L70 36L34 40L-10 18Z" fill="#44683c"/>
</g>
<g filter="url(#b5)">
<!-- dark leaves -->
<path d="M-6 -6H124L120 20L96 34L60 30L40 16L-6 12Z" fill="#0a180a"/>
<path d="M104 10L136 8L138 44L112 56L100 40Z" fill="#5c9052"/>
<path d="M100 34L140 34L124 48L96 46Z" fill="#3c5a30"/>
<path d="M245 22L292 20L300 44L272 50L250 36Z" fill="#2e4a22"/>
<path d="M350 -6H450V14L400 12L372 16Z" fill="#294a1e"/>
<path d="M424 6H450V44H428Z" fill="#223c18"/>
<path d="M336 44L356 46L354 64L338 62Z" fill="#3a5a2a"/>
<path d="M316 72L338 74L340 90L322 86Z" fill="#2a441c"/>
<path d="M356 76L408 72L404 96L380 112L360 104Z" fill="#122808"/>
<path d="M392 112L420 106L450 124V150L400 130Z" fill="#1c3410"/>
<path d="M360 120L410 116L408 186L372 190L362 160Z" fill="#0c1e06"/>
<path d="M408 116L450 130V200L410 190Z" fill="#47682e"/>
<path d="M364 196L450 192V232L386 226Z" fill="#6a9a58"/>
<path d="M426 216L450 214V240L430 238Z" fill="#2a441a"/>
<path d="M300 40L340 30L380 40L390 70L350 72L330 60Z" fill="#6fa060"/>
</g>
<!-- stalk -->
<path d="M388 85L440 124" stroke="#b8a8a8" stroke-width="4" fill="none" filter="url(#b2)"/>
<path d="M296 0L330 14L372 30" stroke="#9a8a80" stroke-width="3" fill="none" filter="url(#b2)" opacity=".7"/>
<!-- fur -->
<g filter="url(#b5)">
<path d="M104 40L150 28L216 26L250 38L282 54L314 74L339 106L352 126L354 160L330 166L262 172L226 180L150 206L128 252L-10 252L-10 210L60 150L104 100Z" fill="#b26c4a"/>
<path d="M250 60L300 80L336 116L346 150L320 150L290 110Z" fill="#d09a7c"/>
</g>
<path d="M105 42L150 30L215 28L250 40L300 75L335 110L348 150L330 160L262 170L226 177L160 200L130 242L60 242L70 180L105 135Z" fill="#000" filter="url(#fur)" opacity=".55"/>
<path d="M105 42L150 30L215 28L250 40L300 75L335 110L348 150L330 160L262 170L226 177L160 200L130 242L90 242L96 180L105 135Z" fill="#000" filter="url(#furl)" opacity=".42"/>
<g filter="url(#b5)">
<path d="M60 34L130 36L128 70L100 76L78 58Z" fill="#5e3626"/>
<path d="M105 104L112 132L120 160L134 252L-10 252V212L28 193L53 154L92 118Z" fill="#8e4a30"/>
<path d="M105 100L108 130L70 170L40 200L20 196L53 150L92 114Z" fill="#c49478"/>
<path d="M-10 222H110V252H-10Z" fill="#6e3c2a"/>
<path d="M124 180L200 172L180 198L140 206Z" fill="#d4a88c" opacity=".6"/>
</g>
<!-- white areas -->
<g filter="url(#b3)">
<path d="M-10 16L40 38L96 65L105 78L105 102L92 116L53 152L28 191L-10 210Z" fill="#e6e6ea"/>
<path d="M134 -8H226L250 30L232 30L214 16L150 16L142 24Z" fill="#e9e9ee"/>
<path d="M216 0L250 34L282 52L314 72L339 104L352 126L346 128L330 106L306 80L276 60L246 44L220 22Z" fill="#d9cccb" opacity=".8"/>
<path d="M140 252L136 214L180 196L226 180L262 176L250 200L236 252Z" fill="#eceef2"/>
<path d="M270 148L300 140L314 148L314 174L304 178L276 172Z" fill="#e6e8ee"/>
<path d="M236 176L266 171L268 190L250 197L236 192Z" fill="#e9e2df"/>
<path d="M300 176L316 160L340 150L352 160L360 193L372 215L388 228L384 252H284L300 204Z" fill="#eef0f4"/>
</g>
<g filter="url(#b5)">
<!-- inner ear -->
<path d="M-6 62L30 64L60 84L62 120L30 128L-6 126Z" fill="#d9bfb0"/>
<path d="M4 58L30 56L48 78L46 106L28 112L8 96Z" fill="#5e4a38"/>
<path d="M30 96L56 100L60 124L36 120Z" fill="#8a8688"/>
</g>
<g filter="url(#b3)">
<path d="M30 34L98 64L106 82L80 72L36 50Z" fill="#3a3a3c" opacity=".75"/>
<path d="M-4 146L10 148L10 158L-4 158Z" fill="#4a4c50"/>
<path d="M-4 198L28 192L20 208L-4 214Z" fill="#5a5a5e"/>
<path d="M152 18L212 17L214 30L154 32Z" fill="#7a4c3c"/>
<path d="M316 142L344 142L346 174L320 174Z" fill="#a4643e"/>
<path d="M350 140L358 142L364 194L356 192Z" fill="#141414"/>
<!-- brown cheek patch -->
<path d="M248 194L304 200L290 222L284 252H230L240 214Z" fill="#8c4a2c"/>
<path d="M244 218L268 214L270 252H238Z" fill="#2c1408"/>
<path d="M256 190L300 200L290 216L262 208Z" fill="#c48c6a"/>
<!-- nose -->
<path d="M366 226L386 226L388 246L364 246Z" fill="#5a6a86"/>
</g>
<!-- eye -->
<ellipse cx="285" cy="188" rx="21" ry="15" fill="#9a9ea6" filter="url(#b3)"/>
<ellipse cx="286" cy="189" rx="15.500" ry="10.500" fill="#16181c" filter="url(#b3)"/>
<ellipse cx="279" cy="183" rx="7" ry="3" fill="#c4c8cc" filter="url(#b2)"/>
</g>
</svg>
<div class="vdiv" style="left:600px;top:1039px;height:33px"></div>
<div class="vdiv" style="left:760px;top:1039px;height:33px"></div>
<div class="vdiv" style="left:840px;top:1039px;height:33px"></div>
<div class="abs" style="left:488px;top:1082px;width:1314px;height:2px;background:#494c50"></div>
<div class="abs" style="left:488px;top:1084px;width:1314px;height:56px;background:#292a2d"></div>
<div class="abs" style="left:1800px;top:2px;width:2px;height:1120px;background:#484b4f"></div>
<div class="t" id="filter" style="left:630.70px;top:70.5px;letter-spacing:0.088px;color:#9aa0a6">Filter by Path</div>
<div class="t" id="bt_head" style="left:508.50px;top:687.0px;letter-spacing:0.017px;color:#9aa0a6">Headers</div>
<div class="t" id="bt_prev" style="left:651.50px;top:687.0px;letter-spacing:-0.317px;color:#e8eaed">Preview</div>
<div class="t" id="i_size" style="left:503.10px;top:1033.0px;letter-spacing:0.130px;color:#9aa0a6">3.7 kB</div>
<div class="t" id="i_dim" style="left:620.30px;top:1033.0px;letter-spacing:0.050px;color:#9aa0a6">200 × 200</div>
<div class="t" id="i_ratio" style="left:780.50px;top:1033.0px;letter-spacing:0.350px;color:#9aa0a6">1:1</div>
<div class="t" id="i_mime" style="left:860.50px;top:1033.0px;letter-spacing:0.514px;color:#9aa0a6">image/jpeg</div>
<div class="t" id="total" style="left:498.50px;top:1092.6px;letter-spacing:0.068px;color:#bdc6cf">Total entries: 15</div>
<div class="abs" style="left:0;top:1121px;width:19px;height:19px;background:radial-gradient(circle at 100% 0,rgba(0,0,0,0) 18.4px,#4b4f54 19.6px,#565b60 21px,#b07a5c 22px)"></div>
<div class="abs" style="left:1783px;top:1121px;width:19px;height:19px;background:radial-gradient(circle at 0 0,rgba(0,0,0,0) 16.8px,#4a4d51 17.5px,#50545a 19.6px,#b07a5c 20.8px)"></div>
</div>
</body>
</html>
